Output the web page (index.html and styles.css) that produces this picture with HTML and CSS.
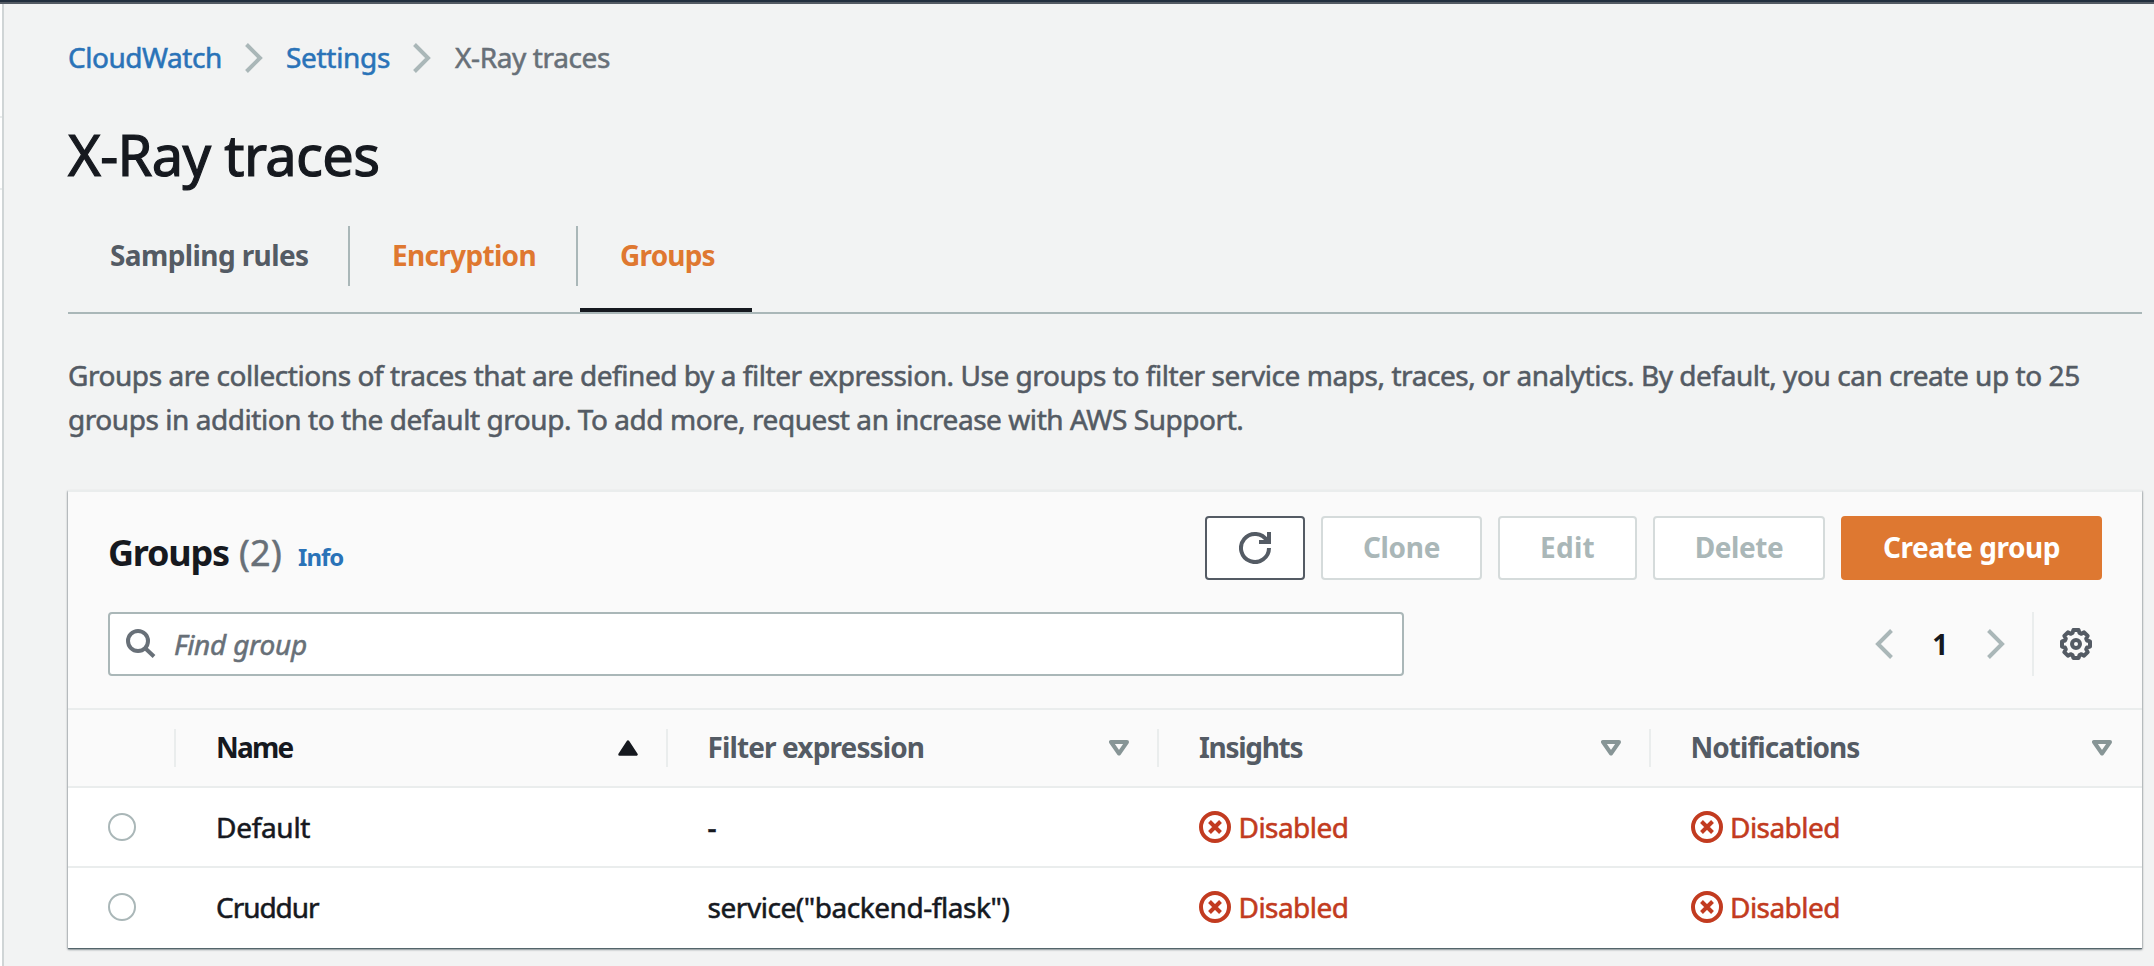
FILE: index.html
```
<!DOCTYPE html>
<html lang="en">
<head>
<meta charset="utf-8">
<title>X-Ray traces</title>
<link rel="stylesheet" href="styles.css">
</head>
<body>
<svg width="0" height="0" class="sprite" aria-hidden="true">
  <symbol id="chevron" viewBox="0 0 18 30"><path d="M1.5 1.5 L15 15 L1.5 28.5" fill="none" stroke="#aab7b8" stroke-width="4"/></symbol>
  <symbol id="tri-down" viewBox="0 0 20 16"><path d="M2 2 H18 L10 13.5 Z" fill="none" stroke="#879596" stroke-width="4" stroke-linejoin="round"/></symbol>
  <symbol id="tri-up" viewBox="0 0 20 16"><path d="M10 1.5 L18.5 14.5 H1.5 Z" fill="#16191f" stroke="#16191f" stroke-width="2.5" stroke-linejoin="round"/></symbol>
  <symbol id="disabled" viewBox="0 0 32 32"><g fill="none" stroke="#c23b20" stroke-width="4"><circle cx="16" cy="16" r="14"/><path d="M10.5 10.5 L21.5 21.5 M21.5 10.5 L10.5 21.5"/></g></symbol>
</svg>
<div class="topbar"></div>
<div class="layout">
  <div class="sidebar"></div>
  <main class="main">
    <nav class="crumbs">
      <a class="crumb-cw">CloudWatch</a>
      <svg class="chev"><use href="#chevron"/></svg>
      <a class="crumb-set">Settings</a>
      <svg class="chev"><use href="#chevron"/></svg>
      <span class="crumb-cur">X-Ray traces</span>
    </nav>
    <h1 class="title">X-Ray traces</h1>
    <div class="tabs">
      <div class="tab tab-rules"><span>Sampling rules</span></div>
      <div class="tab tab-enc"><span>Encryption</span></div>
      <div class="tab tab-groups"><span>Groups</span></div>
    </div>
    <p class="desc"><span>Groups are collections of traces that are defined by a filter expression. Use groups to filter service maps, traces, or analytics. By default, you can create up to 25</span><br><span>groups in addition to the default group. To add more, request an increase with AWS Support.</span></p>
    <section class="card">
      <div class="card-head">
        <div class="head-row">
          <h2 class="heading"><b>Groups</b><span class="count">(2)</span><a class="info">Info</a></h2>
          <div class="actions">
            <div class="btn btn-refresh"><svg width="32" height="32" viewBox="0 0 32 32"><path d="M30 16 A14 14 0 1 1 28.1 9" fill="none" stroke="#545b64" stroke-width="4"/><path d="M20 10 H30 V0" fill="none" stroke="#545b64" stroke-width="4"/></svg></div>
            <div class="btn btn-clone">Clone</div>
            <div class="btn btn-edit">Edit</div>
            <div class="btn btn-delete">Delete</div>
            <div class="btn btn-create">Create group</div>
          </div>
        </div>
        <div class="filter-row">
          <div class="search">
            <svg width="30" height="30" viewBox="0 0 30 30"><g fill="none" stroke="#687078" stroke-width="4"><circle cx="12" cy="12" r="10"/><path d="M19 19 L28 27.5"/></g></svg>
            <span>Find group</span>
          </div>
          <div class="pager">
            <svg class="chev flip"><use href="#chevron"/></svg>
            <b>1</b>
            <svg class="chev"><use href="#chevron"/></svg>
          </div>
          <div class="gear">
            <svg width="32" height="32" viewBox="-16 -16 32 32"><g fill="none" stroke="#545b64" stroke-width="4" stroke-linejoin="round"><path d="M-2.6 -14 H2.6 L3.5 -11 L5.4 -10.2 L8.1 -11.7 L11.7 -8.1 L10.2 -5.4 L11 -3.5 L14 -2.6 V2.6 L11 3.5 L10.2 5.4 L11.7 8.1 L8.1 11.7 L5.4 10.2 L3.5 11 L2.6 14 H-2.6 L-3.5 11 L-5.4 10.2 L-8.1 11.7 L-11.7 8.1 L-10.2 5.4 L-11 3.5 L-14 2.6 V-2.6 L-11 -3.5 L-10.2 -5.4 L-11.7 -8.1 L-8.1 -11.7 L-5.4 -10.2 L-3.5 -11 Z"/><circle r="4"/></g></svg>
          </div>
        </div>
      </div>
      <div class="row thead">
        <div class="cell"></div>
        <div class="cell th sorted"><span class="h-name">Name</span><svg class="tri"><use href="#tri-up"/></svg></div>
        <div class="cell th"><span class="h-filter">Filter expression</span><svg class="tri"><use href="#tri-down"/></svg></div>
        <div class="cell th"><span class="h-ins">Insights</span><svg class="tri"><use href="#tri-down"/></svg></div>
        <div class="cell th"><span class="h-not">Notifications</span><svg class="tri"><use href="#tri-down"/></svg></div>
      </div>
      <div class="row">
        <div class="cell pick"><i class="radio"></i></div>
        <div class="cell">Default</div>
        <div class="cell c-dash">-</div>
        <div class="cell status"><svg class="sicon"><use href="#disabled"/></svg><span>Disabled</span></div>
        <div class="cell status"><svg class="sicon"><use href="#disabled"/></svg><span>Disabled</span></div>
      </div>
      <div class="row last">
        <div class="cell pick"><i class="radio"></i></div>
        <div class="cell c-crud">Cruddur</div>
        <div class="cell c-serv">service("backend-flask")</div>
        <div class="cell status"><svg class="sicon"><use href="#disabled"/></svg><span>Disabled</span></div>
        <div class="cell status"><svg class="sicon"><use href="#disabled"/></svg><span>Disabled</span></div>
      </div>
    </section>
  </main>
</div>
</body>
</html>
```
FILE: styles.css
```
* { box-sizing: border-box; }
body {
  margin: 0;
  height: 966px;
  overflow: hidden;
  background: #f2f3f3;
  color: #16191f;
  font: 400 28px/44px "Noto Sans", "Open Sans", sans-serif;
  letter-spacing: -0.3px;
  -webkit-text-stroke: 0.55px currentColor;
}
b, h2, .btn, .tab, .th, .info { -webkit-text-stroke: 0; }
svg { display: block; flex: none; }
.sprite { position: absolute; }
.topbar { height: 4px; background: #232f3e; border-bottom: 2px solid #545b64; }
.layout { display: flex; height: 962px; }
.sidebar {
  width: 4px;
  flex: none;
  border-right: 2px solid #d0d5d6;
  background: linear-gradient(#fff 112px, #eaeded 112px, #eaeded 114px, #fff 114px, #fff 184px, #eaeded 184px, #eaeded 186px, #fff 186px);
}
.main { flex: 1; padding: 31px 12px 0 64px; }

.crumbs { display: flex; align-items: center; height: 46px; color: #687078; }
.crumbs a, .crumbs span { padding-bottom: 2px; }
.crumbs a { color: #2a73b8; }
.chev { width: 18px; height: 30px; }
.crumb-cw { width: 177px; letter-spacing: -0.46px; }
.crumb-set { width: 127px; margin-left: 23px; letter-spacing: -0.3px; }
.crumb-cur { margin-left: 24px; letter-spacing: -0.38px; }

.title { margin: 37px 0 3px; font-size: 56px; line-height: 72px; font-weight: 400; letter-spacing: -0.65px; -webkit-text-stroke: 1.2px currentColor; }

.tabs { display: flex; align-items: flex-start; height: 121px; border-bottom: 2px solid #aab7b8; padding-top: 33px; font-weight: 700; color: #df7830; }
.tab { display: flex; align-items: flex-start; height: 60px; padding: 7px 0 0 42px; }
.tab-rules { width: 282px; color: #545b64; letter-spacing: -0.6px; border-right: 2px solid #aab7b8; }
.tab-enc { width: 228px; letter-spacing: -0.68px; border-right: 2px solid #aab7b8; }
.tab-groups { width: 172px; height: 86px; margin-left: 2px; padding-left: 40px; letter-spacing: -0.8px; border-bottom: 4px solid #16191f; }

.desc { margin: 39px 0 0; color: #545b64; letter-spacing: -0.443px; white-space: nowrap; }

.card { margin-top: 49px; background: #fff; border-top: 2px solid #eaeded; box-shadow: 0 2px 2px 0 rgba(0, 28, 36, .3), 1px 1px 2px 0 rgba(0, 28, 36, .15), -1px 1px 2px 0 rgba(0, 28, 36, .15), 0 1px 1px 0 rgba(0, 28, 36, .4); }
.card-head { height: 216px; padding: 24px 40px 0; background: #fafafa; }
.head-row { display: flex; justify-content: space-between; height: 96px; }
.heading { display: flex; align-items: baseline; margin: 9px 0 0; font-size: 36px; line-height: 56px; font-weight: 400; }
.heading b { letter-spacing: -1.2px; }
.count { margin-left: 10px; color: #687078; letter-spacing: 0.3px; -webkit-text-stroke: 0.5px currentColor; }
.info { margin-left: 16px; font-size: 24px; font-weight: 700; color: #2a73b8; letter-spacing: -1px; }
.actions { display: flex; gap: 16px; }
.btn { display: flex; align-items: center; justify-content: center; height: 64px; padding-bottom: 2px; border: 2px solid #d5dbdb; border-radius: 4px; background: #fff; color: #aab7b8; font-weight: 700; }
.btn-refresh { width: 100px; padding: 0; border-color: #545b64; }
.btn-clone { width: 161px; }
.btn-edit { width: 139px; letter-spacing: 0.3px; }
.btn-delete { width: 172px; letter-spacing: -0.45px; }
.btn-create { width: 261px; border-color: #de7831; background: #de7831; color: #fff; letter-spacing: -0.45px; }

.filter-row { display: flex; align-items: center; height: 64px; }
.search { display: flex; align-items: center; gap: 18px; width: 1296px; height: 64px; padding-left: 16px; border: 2px solid #aab7b8; border-radius: 4px; background: #fff; color: #687078; font-style: italic; letter-spacing: -0.23px; }
.pager { display: flex; align-items: center; justify-content: space-between; width: 130px; margin-left: 471px; }
.pager b { padding-bottom: 1px; }
.flip { transform: scaleX(-1); }
.gear { display: flex; align-items: center; height: 64px; margin-left: 27px; padding-left: 26px; border-left: 2px solid #eaeded; }

.row { display: grid; grid-template-columns: 108px repeat(4, 491.5px); height: 80px; align-items: center; border-bottom: 2px solid #eaeded; }
.last { border-bottom-color: transparent; }
.cell { padding-left: 40px; height: 44px; white-space: nowrap; }
.thead { height: 80px; border-top: 2px solid #eaeded; background: #fafafa; }
.th { display: flex; align-items: center; justify-content: space-between; height: 38px; padding: 0 30px 0 40px; margin-left: -2px; border-left: 2px solid #eaeded; color: #545b64; font-weight: 700; }
.th span { padding-bottom: 2px; }
.sorted { color: #16191f; }
.tri { width: 20px; height: 16px; }
.h-name { letter-spacing: -1.8px; }
.h-filter { letter-spacing: -0.88px; }
.h-ins { letter-spacing: -1.3px; }
.h-not { letter-spacing: -0.97px; }
.c-crud { letter-spacing: -1.05px; }
.c-serv { letter-spacing: -0.45px; }
.c-dash { font-weight: 500; }
.pick { display: flex; align-items: center; }
.radio { width: 28px; height: 28px; border: 2px solid #aab7b8; border-radius: 50%; background: #fff; }
.status { display: flex; align-items: center; gap: 7.5px; color: #c23b20; letter-spacing: -0.55px; }
.sicon { width: 32px; height: 32px; }
```
